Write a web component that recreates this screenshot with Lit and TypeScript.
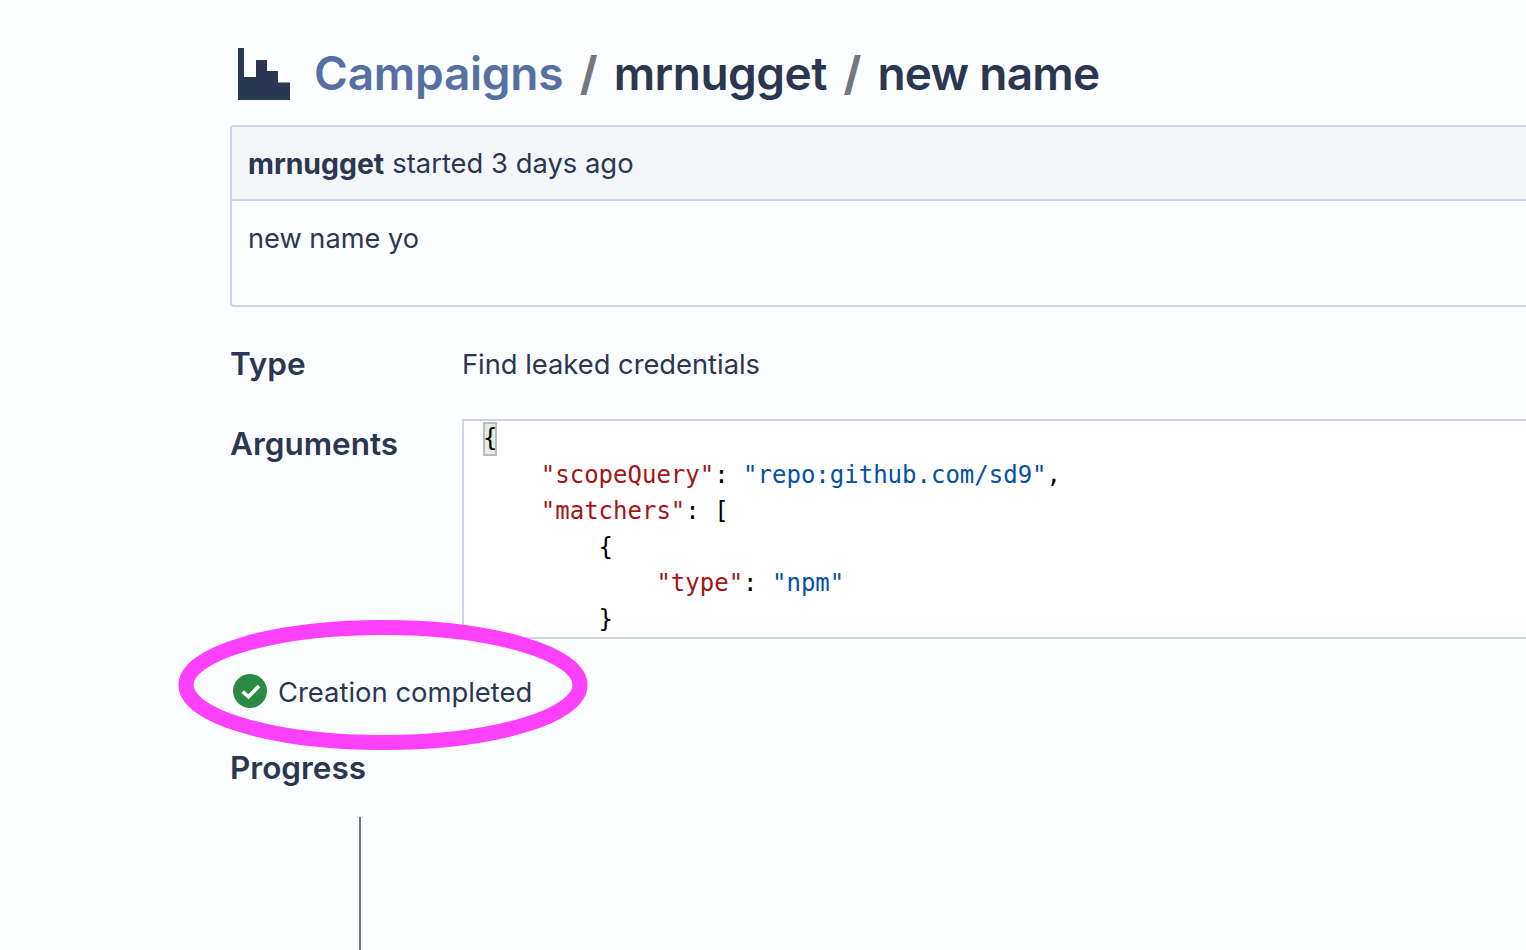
import { LitElement, html, css, svg } from "lit";
import { customElement } from "lit/decorators.js";

@customElement("app-root")
export class AppRoot extends LitElement {
  static styles = css`
    :host {
      display: block;
      position: relative;
      width: 1526px;
      height: 950px;
      overflow: hidden;
      background: #fbfdff;
      color: #2b3750;
      font-family: Inter, "Liberation Sans", sans-serif;
    }
    .page {
      width: 1500px;
      margin-left: 230px;
      padding-top: 42px;
      box-sizing: border-box;
    }
    .title {
      display: flex;
      align-items: center;
      height: 61px;
      margin: 0 0 22px 8px;
      font-size: 46px;
      font-weight: 600;
      letter-spacing: -0.5px;
    }
    .logo {
      width: 52px;
      height: 52px;
      margin: 2px 24px 0 0;
      flex: none;
    }
    .link { color: #5570a1; letter-spacing: -0.25px; }
    .sep { color: #73767f; margin: 0 16.500px; font-weight: 700; }
    .name { letter-spacing: -0.75px; }
    .card {
      border: 2px solid #ccd5e4;
      border-radius: 4px;
      height: 182px;
      box-sizing: border-box;
      font-size: 27.2px;
    }
    .card-head {
      height: 74px;
      box-sizing: border-box;
      padding: 0 16px;
      display: flex;
      align-items: center;
      background: #f5f6fa;
      border-bottom: 2px solid #ccd5e4;
      font-size: 27.400px;
    }
    .card-head b { font-size: 28.400px; font-weight: 700; margin-right: 8px; }
    .card-body { padding: 18px 16px; line-height: 40px; }
    .row {
      display: grid;
      grid-template-columns: 232px 1fr;
    }
    .label { font-size: 31.500px; font-weight: 600; line-height: 40px; }
    .value { font-size: 27.300px; line-height: 40px; }
    .row-type { margin-top: 38px; }
    .row-type .label { margin-top: -1px; }
    .row-args { margin-top: 34px; }
    .row-args .label { margin-top: 5px; }
    .code {
      height: 220px;
      overflow: hidden;
      box-sizing: border-box;
      border: 2px solid #ccd5e4;
      border-right: 0;
      padding: 0 0 0 19px;
      background: #fefefe;
      font-family: "DejaVu Sans Mono", monospace;
      font-size: 24px;
      color: #000;
    }
    .ln { height: 36px; line-height: 36px; white-space: pre; }
    .k { color: #a31515; }
    .s { color: #0451a5; }
    .m {
      background: #e4ebe1;
      outline: 2px solid #bbbbbb;
      outline-offset: -2px;
      display: inline-block;
      line-height: 32px;
      height: 34px;
      vertical-align: top;
      margin-top: 1px;
    }
    .status {
      display: flex;
      align-items: center;
      gap: 11px;
      margin: 33px 0 0 3px;
      font-size: 27.400px;
      line-height: 40px;
    }
    .status svg { width: 34px; height: 34px; flex: none; margin-top: -2px; }
    .progress { margin-top: 36px; }
    .line {
      width: 2px;
      height: 140px;
      background: #6f7480;
      margin: 29px 0 0 129px;
    }
    .mark {
      position: absolute;
      left: 170px;
      top: 610px;
      width: 430px;
      height: 150px;
      pointer-events: none;
    }
  `;

  private indent(level: number) {
    return `padding-left:${level * 57.8}px`;
  }

  render() {
    return html`
      <div class="page">
        <h1 class="title">
          <svg class="logo" viewBox="0 0 52 52">
            <path fill="#2b3750" d="M0 0H6V29H18V12H29V23H40V34.500H52V52H0Z" />
          </svg>
          <span class="link">Campaigns</span>
          <span class="sep">/</span>
          <span>mrnugget</span>
          <span class="sep">/</span>
          <span class="name">new name</span>
        </h1>
        <section class="card">
          <div class="card-head"><b>mrnugget</b> started 3 days ago</div>
          <div class="card-body">new name yo</div>
        </section>
        <div class="row row-type">
          <div class="label">Type</div>
          <div class="value">Find leaked credentials</div>
        </div>
        <div class="row row-args">
          <div class="label">Arguments</div>
          <div class="code">
            <div class="ln"><span class="m">{</span></div>
            <div class="ln" style=${this.indent(1)}><span class="k">"scopeQuery"</span>: <span class="s">"repo:github.com/sd9"</span>,</div>
            <div class="ln" style=${this.indent(1)}><span class="k">"matchers"</span>: [</div>
            <div class="ln" style=${this.indent(2)}>{</div>
            <div class="ln" style=${this.indent(3)}><span class="k">"type"</span>: <span class="s">"npm"</span></div>
            <div class="ln" style=${this.indent(2)}>}</div>
          </div>
        </div>
        <div class="status">
          <svg viewBox="0 0 34 34">
            <circle cx="17" cy="17" r="17" fill="#2b8a43" />
            <path d="M9.700 17.700L15.500 22.800L26 12" fill="none" stroke="#fff" stroke-width="3.600" />
          </svg>
          <span>Creation completed</span>
        </div>
        <div class="label progress">Progress</div>
        <div class="line"></div>
      </div>
      <svg class="mark" viewBox="0 0 430 150">
        ${svg`<ellipse cx="213" cy="75" rx="197" ry="57.500" fill="none" stroke="#fd40fb" stroke-width="15" />`}
      </svg>
    `;
  }
}
